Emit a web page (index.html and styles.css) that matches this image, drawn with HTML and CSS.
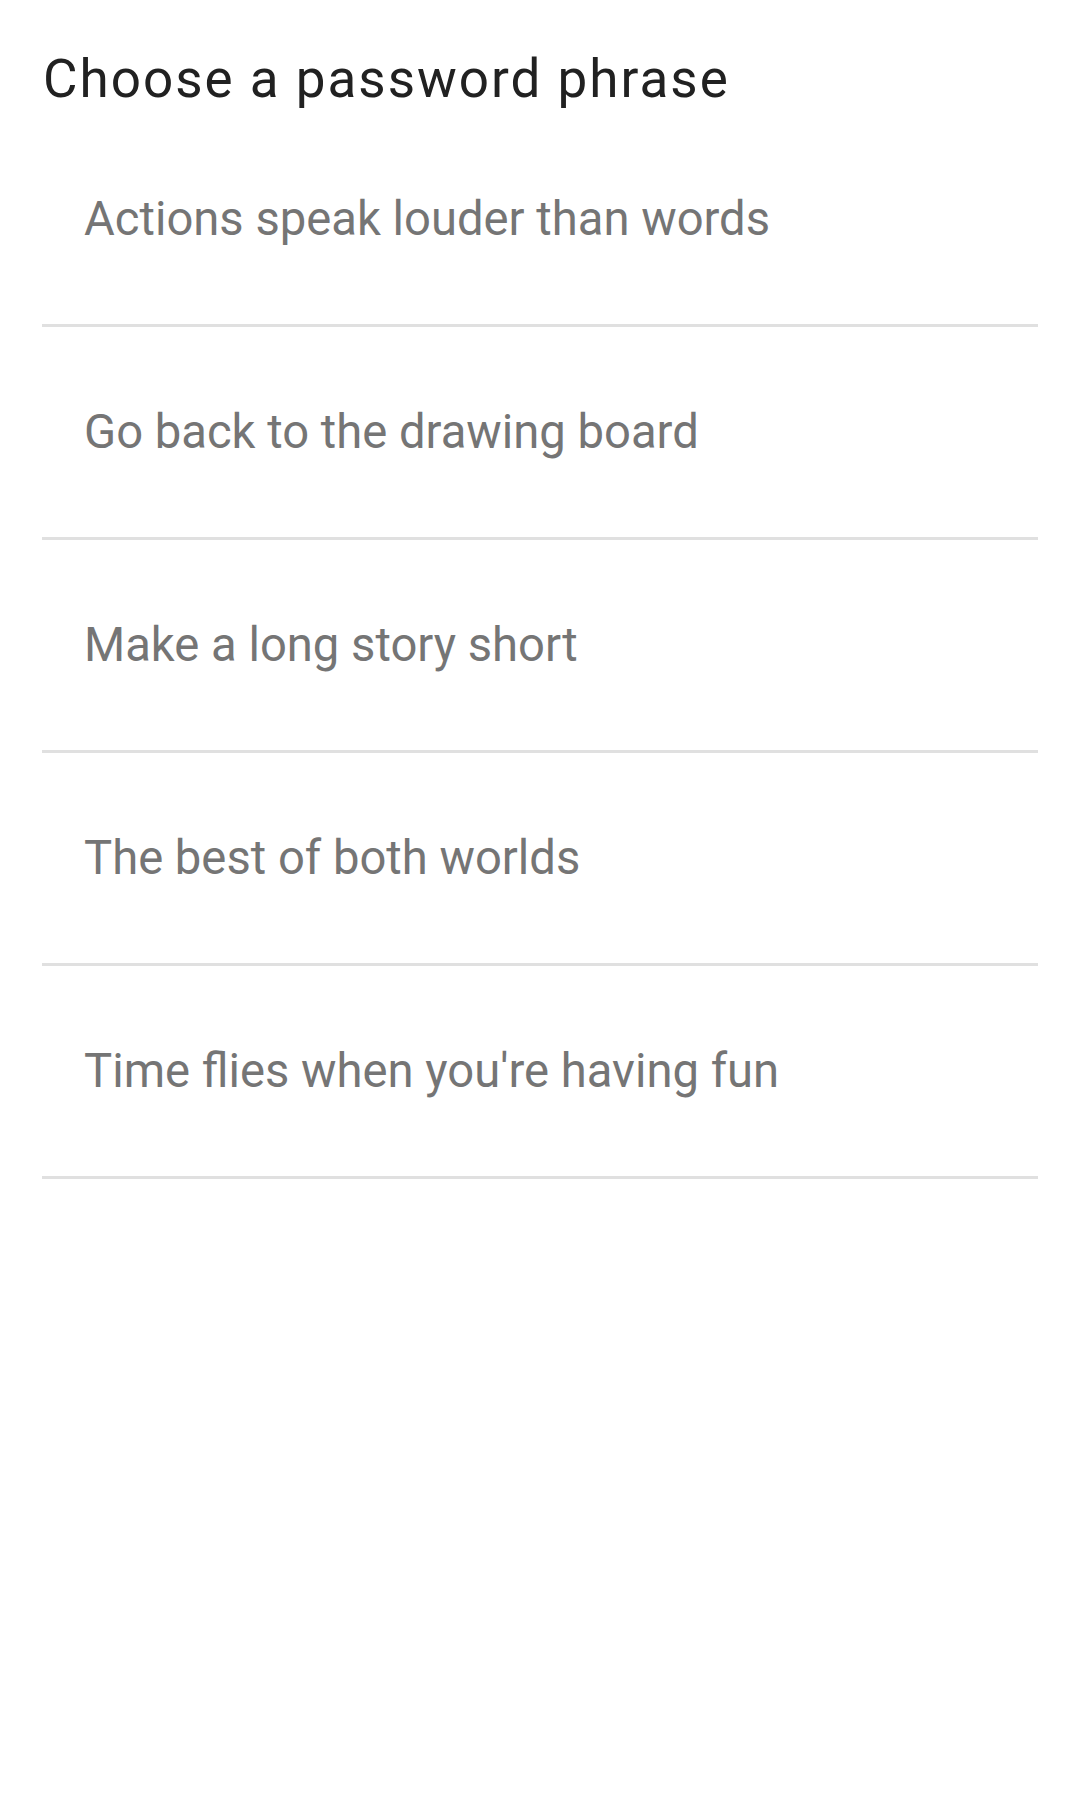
FILE: index.html
```html
<!DOCTYPE html>
<html>
<head>
<meta charset="utf-8">
<link rel="stylesheet" href="styles.css">
</head>
<body>
<div class="screen">
  <h1 class="title">Choose a password phrase</h1>
  <ul class="list">
    <li class="item">Actions speak louder than words</li>
    <li class="item">Go back to the drawing board</li>
    <li class="item">Make a long story short</li>
    <li class="item">The best of both worlds</li>
    <li class="item">Time flies when you're having fun</li>
  </ul>
</div>
</body>
</html>
```
FILE: styles.css
```css
html, body {
  margin: 0;
  padding: 0;
  background: #ffffff;
}
body {
  font-family: Roboto, "Noto Sans", sans-serif;
  width: 1080px;
  height: 1794px;
}
.screen {
  padding: 0 42px;
}
.title {
  margin: 0;
  padding: 53px 0 8px 1px;
  font-size: 53px;
  line-height: 53px;
  font-weight: 400;
  color: #212121;
  letter-spacing: 2px;
}
.list {
  list-style: none;
  margin: 0;
  padding: 0;
}
.item {
  height: 210px;
  display: flex;
  align-items: center;
  padding-left: 42px;
  border-bottom: 3px solid #e0e0e0;
  font-size: 47.2px;
  color: #757575;
}
```
